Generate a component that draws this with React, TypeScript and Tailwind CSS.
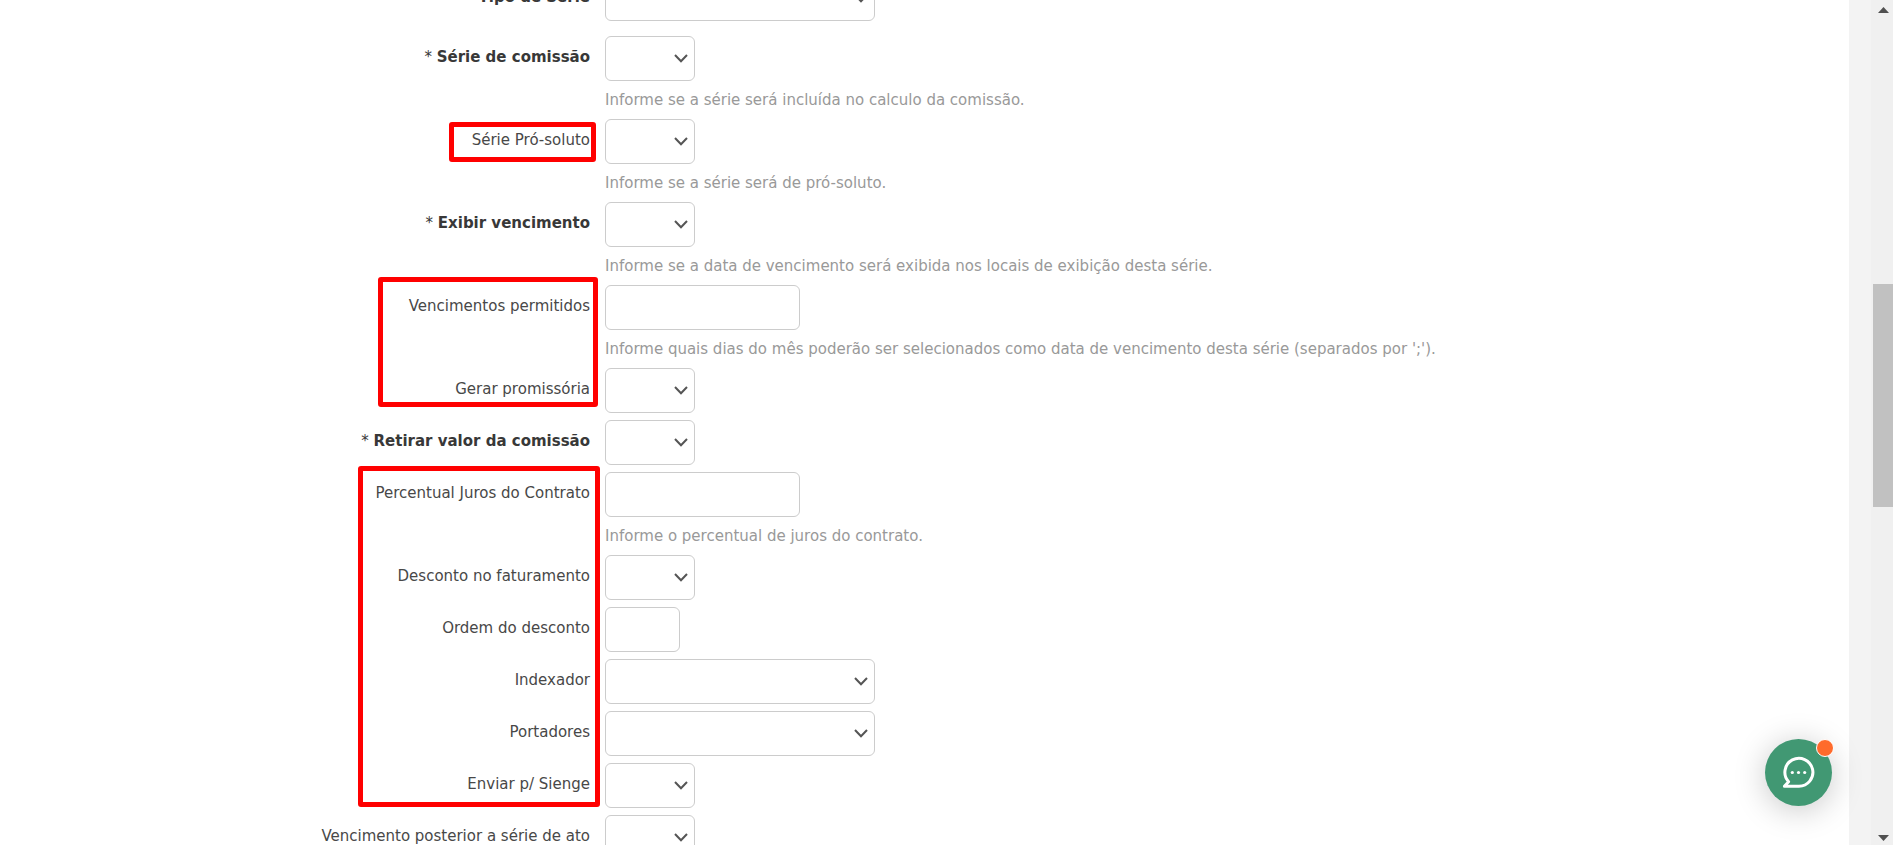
type FieldKind = 'select' | 'input'
type FieldSize = 'xs' | 'sm' | 'md' | 'lg'

interface Field {
  id: string
  label: string
  kind: FieldKind
  size: FieldSize
  required?: boolean
  hint?: string
}

interface FieldGroup {
  fields: Field[]
  highlight?: string
}

const sizes: Record<FieldSize, string> = {
  xs: 'w-[75px]',
  sm: 'w-[90px]',
  md: 'w-[195px]',
  lg: 'w-[270px]',
}

const groups: FieldGroup[] = [
  {
    fields: [
      {
        id: 'serie-comissao',
        label: 'Série de comissão',
        kind: 'select',
        size: 'sm',
        required: true,
        hint: 'Informe se a série será incluída no calculo da comissão.',
      },
    ],
  },
  {
    highlight: 'top-[3px] bottom-10 left-[449px] w-[147px]',
    fields: [
      {
        id: 'serie-pro-soluto',
        label: 'Série Pró-soluto',
        kind: 'select',
        size: 'sm',
        hint: 'Informe se a série será de pró-soluto.',
      },
    ],
  },
  {
    fields: [
      {
        id: 'exibir-vencimento',
        label: 'Exibir vencimento',
        kind: 'select',
        size: 'sm',
        required: true,
        hint: 'Informe se a data de vencimento será exibida nos locais de exibição desta série.',
      },
    ],
  },
  {
    highlight: '-top-2 bottom-[13px] left-[378px] w-[220px]',
    fields: [
      {
        id: 'vencimentos-permitidos',
        label: 'Vencimentos permitidos',
        kind: 'input',
        size: 'md',
        hint: "Informe quais dias do mês poderão ser selecionados como data de vencimento desta série (separados por ';').",
      },
      { id: 'gerar-promissoria', label: 'Gerar promissória', kind: 'select', size: 'sm' },
    ],
  },
  {
    fields: [
      { id: 'retirar-comissao', label: 'Retirar valor da comissão', kind: 'select', size: 'sm', required: true },
    ],
  },
  {
    highlight: '-top-[6px] bottom-2 left-[358px] w-[242px]',
    fields: [
      {
        id: 'percentual-juros',
        label: 'Percentual Juros do Contrato',
        kind: 'input',
        size: 'md',
        hint: 'Informe o percentual de juros do contrato.',
      },
      { id: 'desconto-faturamento', label: 'Desconto no faturamento', kind: 'select', size: 'sm' },
      { id: 'ordem-desconto', label: 'Ordem do desconto', kind: 'input', size: 'xs' },
      { id: 'indexador', label: 'Indexador', kind: 'select', size: 'lg' },
      { id: 'portadores', label: 'Portadores', kind: 'select', size: 'lg' },
      { id: 'enviar-sienge', label: 'Enviar p/ Sienge', kind: 'select', size: 'sm' },
    ],
  },
  {
    fields: [
      { id: 'vencimento-posterior', label: 'Vencimento posterior a série de ato', kind: 'select', size: 'sm' },
    ],
  },
]

const controlClass = 'block h-[45px] w-full appearance-none rounded-md border border-[#ccc] bg-white px-3 outline-none focus:border-[#888]'

function FormRow({ field }: { field: Field }) {
  return (
    <div className="flex items-start gap-[15px] pb-[7px]">
      <label
        className={
          field.required
            ? 'w-[590px] shrink-0 pt-[11px] text-right leading-5 font-bold text-[#383838]'
            : 'w-[590px] shrink-0 pt-[11px] text-right leading-5 text-[#484848]'
        }
        htmlFor={field.id}
      >
        {field.required && <span className="font-normal">* </span>}
        {field.label}
      </label>
      <div className="min-w-0 flex-1">
        <div className={`relative ${sizes[field.size]}`}>
          {field.kind === 'select' ? (
            <>
              <select className={controlClass} id={field.id} />
              <svg
                aria-hidden="true"
                className="pointer-events-none absolute top-[18px] right-[7px] h-[9px] w-[14px]"
                fill="none"
                stroke="#555"
                strokeWidth="2"
                viewBox="0 0 14 9"
              >
                <path d="M1 1l6 6.3L13 1" />
              </svg>
            </>
          ) : (
            <input className={controlClass} id={field.id} type="text" />
          )}
        </div>
        {field.hint && <p className="mt-2 leading-[23px] text-[#999]">{field.hint}</p>}
      </div>
    </div>
  )
}

function ScrollBar() {
  return (
    <div className="flex w-[22px] shrink-0 flex-col items-end bg-[#f0f0f0]">
      <div className="flex h-5 w-5 items-center justify-center">
        <svg aria-hidden="true" className="h-[6px] w-[11px]" fill="#505050" viewBox="0 0 11 6">
          <path d="M0 6L5.5 0L11 6Z" />
        </svg>
      </div>
      <div className="flex w-5 flex-1 flex-col">
        <div className="flex-[264]" />
        <div className="flex-[223] bg-[#c1c1c1]" />
        <div className="flex-[324]" />
      </div>
      <div className="flex h-[14px] w-5 items-center justify-center">
        <svg aria-hidden="true" className="h-[6px] w-[11px]" fill="#505050" viewBox="0 0 11 6">
          <path d="M0 0L5.5 6L11 0Z" />
        </svg>
      </div>
    </div>
  )
}

function ChatButton() {
  return (
    <button
      aria-label="Abrir chat"
      className="fixed right-[61px] bottom-[39px] flex h-[67px] w-[67px] items-center justify-center rounded-full bg-[#419873] shadow-[0_4px_32px_rgba(0,0,0,0.22)]"
      type="button"
    >
      <svg aria-hidden="true" className="h-[33px] w-[33px]" fill="none" viewBox="0 0 33 33">
        <path
          d="M16.5 30.3H2.4L6.6 25.8A14 14 0 1 1 16.5 30.3Z"
          stroke="white"
          strokeLinejoin="round"
          strokeWidth="3"
        />
        <circle cx="10.3" cy="16.5" fill="white" r="1.6" />
        <circle cx="16.5" cy="16.5" fill="white" r="1.6" />
        <circle cx="22.7" cy="16.5" fill="white" r="1.6" />
      </svg>
      <span className="absolute top-0 -right-[2px] h-[18px] w-[18px] rounded-full border border-white bg-[#ff6b2c]" />
    </button>
  )
}

export default function App() {
  return (
    <div className="flex h-screen overflow-hidden bg-[#f3f3f3] font-['Verdana','DejaVu_Sans',sans-serif] text-[15px]">
      <main className="min-w-0 flex-1 overflow-hidden bg-white">
        <form className="-mt-6">
          <div className="pb-2">
            <FormRow field={{ id: 'tipo-serie', label: 'Tipo de Série', kind: 'select', size: 'lg', required: true }} />
          </div>
          {groups.map((group) => (
            <div className="relative" key={group.fields[0].id}>
              {group.fields.map((field) => (
                <FormRow field={field} key={field.id} />
              ))}
              {group.highlight && (
                <div className={`pointer-events-none absolute rounded-[3px] border-5 border-[#ff0000] ${group.highlight}`} />
              )}
            </div>
          ))}
        </form>
      </main>
      <div className="w-[22px] shrink-0" />
      <ScrollBar />
      <ChatButton />
    </div>
  )
}
